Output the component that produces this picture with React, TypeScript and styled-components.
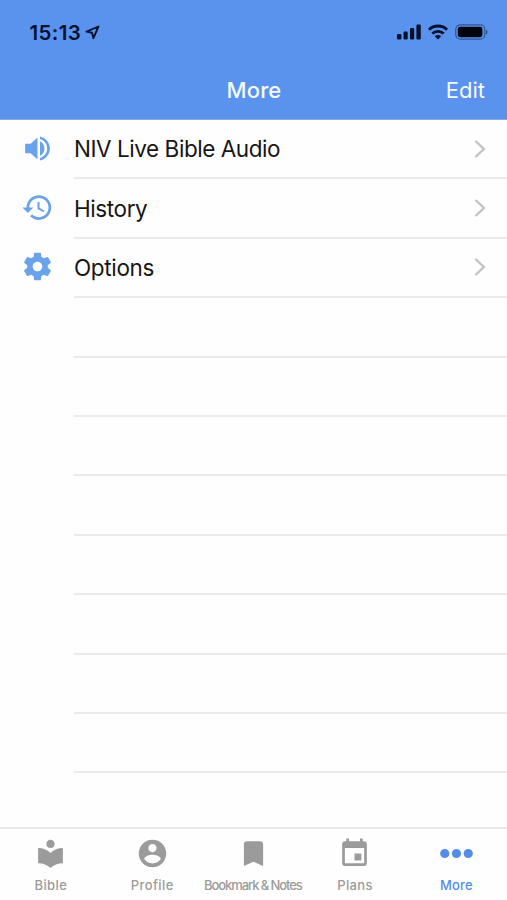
import React from "react";
import styled, { createGlobalStyle } from "styled-components";

const GlobalStyle = createGlobalStyle`
  * { box-sizing: border-box; }
  body { margin: 0; background: #fff; font-family: Inter, "Liberation Sans", sans-serif; }
`;

const Screen = styled.div`
  display: flex;
  flex-direction: column;
  width: 507px;
  height: 900px;
  overflow: hidden;
  background: #fefefe;
`;

const Header = styled.header`
  flex: none;
  height: 120px;
  background: #5a93ee;
  border-bottom: 1px solid #86a9e0;
`;

const StatusBar = styled.div`
  display: flex;
  align-items: center;
  justify-content: space-between;
  height: 62px;
  padding: 2px 19px 0 29.5px;
  color: #06112e;
`;

const Clock = styled.div`
  display: flex;
  align-items: center;
  gap: 4px;
  font-size: 20.5px;
  font-weight: 580;
  letter-spacing: 0.35px;
`;

const Indicators = styled.div`
  display: flex;
  align-items: center;
  gap: 7px;
`;

const NavBar = styled.div`
  display: grid;
  grid-template-columns: 1fr auto 1fr;
  align-items: center;
  height: 55px;
  padding: 0 22px 0 23px;
  color: #f4faff;
  font-size: 22px;
`;

const Title = styled.h1`
  grid-column: 2;
  margin: 0;
  font-size: 22px;
  font-weight: 550;
  letter-spacing: 0.1px;
`;

const EditButton = styled.button`
  justify-self: end;
  padding: 0;
  border: 0;
  background: none;
  color: inherit;
  font: inherit;
  letter-spacing: 0;
`;

const List = styled.main`
  flex: 1;
  display: grid;
  grid-auto-rows: 59.4px;
  align-content: start;
  min-height: 0;
`;

const Row = styled.div`
  display: grid;
  grid-template-columns: 74px 1fr;
`;

const RowIcon = styled.div`
  display: flex;
  align-items: center;
  padding: 0 0 3.4px 20.6px;
  color: #6ba3ea;
`;

const RowBody = styled.div`
  display: flex;
  align-items: center;
  justify-content: space-between;
  padding-right: 21px;
  border-bottom: 2px solid #ebebeb;
  color: #161616;
`;

const RowLabel = styled.span<{ $spacing: number }>`
  font-size: 22.5px;
  letter-spacing: ${(p) => p.$spacing}px;
`;

const TabBar = styled.nav`
  flex: none;
  display: grid;
  grid-template-columns: repeat(5, 1fr);
  height: 73px;
  border-top: 2px solid #e8e8e8;
`;

const Tab = styled.div<{ $active?: boolean }>`
  display: flex;
  flex-direction: column;
  align-items: center;
  padding-top: 8px;
  color: ${(p) => (p.$active ? "#538de5" : "#9b9b9b")};
`;

const TabLabel = styled.span<{ $spacing: number }>`
  margin-top: 7px;
  margin-right: ${(p) => -p.$spacing}px;
  font-size: 13px;
  line-height: 16px;
  font-weight: 550;
  letter-spacing: ${(p) => p.$spacing}px;
  white-space: nowrap;
`;

const Glyph = ({ d }: { d: string }) => (
  <svg width="33" height="33" viewBox="0 0 24 24" fill="currentColor">
    <path d={d} />
  </svg>
);

const Chevron = () => (
  <svg width="12" height="18" viewBox="0 0 12 18" fill="none" stroke="#c3c3c3" strokeWidth="2.4">
    <path d="M1.5 1 9.8 9 1.5 17" />
  </svg>
);

const icons = {
  volume:
    "M3 8.6v6.8h4l5 4.6V4L7 8.6H3zm14.1 3.4c0-2.4-1.3-4.5-3.3-5.3v10.6c2-.8 3.3-2.9 3.3-5.3zM13.8 3.23v1.9c3 .86 5.2 3.6 5.2 6.87s-2.2 6.01-5.2 6.87v1.9c4.21-.91 7.2-4.49 7.2-8.77s-2.99-7.86-7.2-8.77z",
  history:
    "M13 3c-4.97 0-9 4.03-9 9H1l3.89 3.89.07.14L9 12H6c0-3.87 3.13-7 7-7s7 3.13 7 7-3.13 7-7 7c-1.93 0-3.68-.79-4.94-2.06l-1.42 1.42C8.27 19.99 10.51 21 13 21c4.97 0 9-4.03 9-9s-4.03-9-9-9zm-1 5v5l4.28 2.54.72-1.21-3.5-2.08V8H12z",
  settings:
    "M19.43 12.98c.04-.32.07-.64.07-.98s-.03-.66-.07-.98l2.11-1.65c.19-.15.24-.42.12-.64l-2-3.46c-.12-.22-.39-.3-.61-.22l-2.49 1c-.52-.4-1.08-.73-1.69-.98l-.38-2.65C14.46 2.18 14.25 2 14 2h-4c-.25 0-.46.18-.49.42l-.38 2.65c-.61.25-1.17.59-1.69.98l-2.49-1c-.23-.09-.49 0-.61.22l-2 3.46c-.13.22-.07.49.12.64l2.11 1.65c-.04.32-.07.65-.07.98s.03.66.07.98l-2.11 1.65c-.19.15-.24.42-.12.64l2 3.46c.12.22.39.3.61.22l2.49-1c.52.4 1.08.73 1.69.98l.38 2.65c.03.24.24.42.49.42h4c.25 0 .46-.18.49-.42l.38-2.65c.61-.25 1.17-.59 1.69-.98l2.49 1c.23.09.49 0 .61-.22l2-3.46c.12-.22.07-.49-.12-.64l-2.11-1.65zM12 15.5c-1.93 0-3.5-1.57-3.5-3.5s1.57-3.5 3.5-3.5 3.5 1.57 3.5 3.5-1.57 3.5-3.5 3.5z",
  library:
    "M12 11.55C9.64 9.35 6.48 8 3 8v11c3.48 0 6.64 1.35 9 3.55 2.36-2.19 5.52-3.55 9-3.55V8c-3.48 0-6.64 1.35-9 3.55zM12 8c1.66 0 3-1.34 3-3s-1.34-3-3-3-3 1.34-3 3 1.34 3 3 3z",
  account:
    "M12 2C6.48 2 2 6.48 2 12s4.48 10 10 10 10-4.48 10-10S17.52 2 12 2zm0 3c1.66 0 3 1.34 3 3s-1.34 3-3 3-3-1.34-3-3 1.34-3 3-3zm0 14.2c-2.5 0-4.71-1.28-6-3.22.03-1.99 4-3.08 6-3.08 1.99 0 5.97 1.09 6 3.08-1.29 1.94-3.5 3.22-6 3.22z",
  bookmark: "M17 3H7c-1.1 0-1.99.9-1.99 2L5 21l7-3 7 3V5c0-1.1-.9-2-2-2z",
  event:
    "M17 12h-5v5h5v-5zM16 1v2H8V1H6v2H5c-1.11 0-1.99.9-1.99 2L3 19c0 1.1.89 2 2 2h14c1.1 0 2-.9 2-2V5c0-1.1-.9-2-2-2h-1V1h-2zm3 18H5V8h14v11z",
  more: "M0.1 12a3.35 3.35 0 1 0 6.7 0a3.35 3.35 0 1 0-6.7 0zM8.6 12a3.35 3.35 0 1 0 6.7 0a3.35 3.35 0 1 0-6.7 0zM17.2 12a3.35 3.35 0 1 0 6.7 0a3.35 3.35 0 1 0-6.7 0z",
};

const rows = [
  { icon: icons.volume, label: "NIV Live Bible Audio", spacing: -0.45 },
  { icon: icons.history, label: "History", spacing: -0.4 },
  { icon: icons.settings, label: "Options", spacing: -0.35 },
];

const tabs = [
  { icon: icons.library, label: "Bible", spacing: 0.4 },
  { icon: icons.account, label: "Profile", spacing: 0.4 },
  { icon: icons.bookmark, label: "Bookmark & Notes", spacing: -1.08 },
  { icon: icons.event, label: "Plans", spacing: 0.4 },
  { icon: icons.more, label: "More", spacing: 0.2, active: true },
];

const emptyRows = Array.from({ length: 8 }, (_, i) => i);

export default function App() {
  return (
    <Screen>
      <GlobalStyle />
      <Header>
        <StatusBar>
          <Clock>
            15:13
            <svg width="15" height="15" viewBox="0 0 15 15" fill="none" stroke="currentColor" strokeWidth="1.9" strokeLinejoin="round">
              <path d="M13.5 1.5 1.5 6.6 7 7.8 8.4 13.2Z" />
            </svg>
          </Clock>
          <Indicators>
            <svg width="24" height="16" viewBox="0 0 24 16" fill="currentColor">
              <rect x="0" y="10" width="4.4" height="5.5" rx="1.2" />
              <rect x="6.5" y="7.5" width="4.2" height="8" rx="1.2" />
              <rect x="13" y="4" width="4.2" height="11.5" rx="1.2" />
              <rect x="19.4" y="0.5" width="4.4" height="15" rx="1.2" />
            </svg>
            <svg width="20" height="16" viewBox="0 0 20 16" fill="none" stroke="currentColor" strokeWidth="2.8">
              <path d="M1 5.7a12.8 12.8 0 0 1 18 0M4.3 9.6a8.2 8.2 0 0 1 11.4 0" />
              <path d="M10 15.5 6.8 12.2a4.6 4.6 0 0 1 6.4 0Z" fill="currentColor" stroke="none" />
            </svg>
            <svg width="33" height="16" viewBox="0 0 33 16">
              <rect x="0.8" y="0.8" width="29" height="14.4" rx="4.5" fill="none" stroke="#30578f" strokeWidth="1.2" />
              <rect x="2.8" y="2.8" width="24.6" height="10.4" rx="2.4" fill="#02050e" />
              <path d="M31 5.4c2 .8 2 4.4 0 5.2z" fill="#30578f" />
            </svg>
          </Indicators>
        </StatusBar>
        <NavBar>
          <Title>More</Title>
          <EditButton>Edit</EditButton>
        </NavBar>
      </Header>
      <List>
        {rows.map((row) => (
          <Row key={row.label}>
            <RowIcon>
              <Glyph d={row.icon} />
            </RowIcon>
            <RowBody>
              <RowLabel $spacing={row.spacing}>{row.label}</RowLabel>
              <Chevron />
            </RowBody>
          </Row>
        ))}
        {emptyRows.map((i) => (
          <Row key={i}>
            <span />
            <RowBody />
          </Row>
        ))}
      </List>
      <TabBar>
        {tabs.map((tab) => (
          <Tab key={tab.label} $active={tab.active}>
            <Glyph d={tab.icon} />
            <TabLabel $spacing={tab.spacing}>{tab.label}</TabLabel>
          </Tab>
        ))}
      </TabBar>
    </Screen>
  );
}
